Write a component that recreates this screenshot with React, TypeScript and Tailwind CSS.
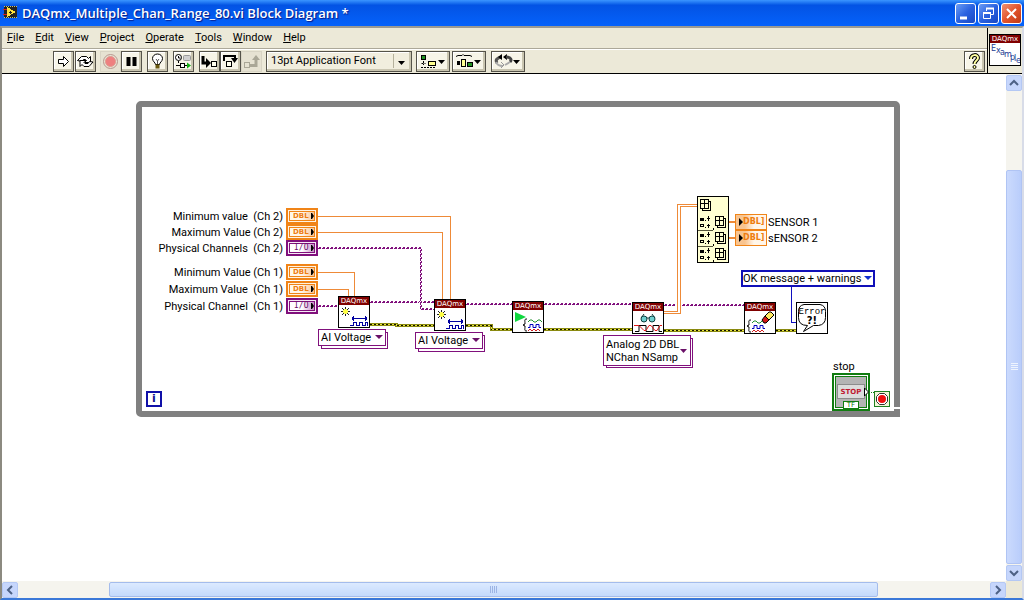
import type { ReactNode } from "react";
import clsx from "clsx";

const menus = ["File", "Edit", "View", "Project", "Operate", "Tools", "Window", "Help"];

const inputs = [
  { label: "Minimum value  (Ch 2)", kind: "DBL", at: "top-[134px]" },
  { label: "Maximum Value (Ch 2)", kind: "DBL", at: "top-[150px]" },
  { label: "Physical Channels  (Ch 2)", kind: "I/O", at: "top-[166px]" },
  { label: "Minimum Value (Ch 1)", kind: "DBL", at: "top-[190px]" },
  { label: "Maximum Value  (Ch 1)", kind: "DBL", at: "top-[207px]" },
  { label: "Physical Channel  (Ch 1)", kind: "I/O", at: "top-[224px]" },
];

const outputs = [
  { label: "SENSOR 1", at: "top-[140px]" },
  { label: "sENSOR 2", at: "top-[156px]" },
];

/* ---------- title bar ---------- */

const CaptionButton = ({
  label,
  close,
  children,
}: {
  label: string;
  close?: boolean;
  children: ReactNode;
}) => (
  <button
    aria-label={label}
    className={clsx(
      "flex h-[21px] w-[21px] items-center justify-center rounded-[3px] border border-white",
      close
        ? "bg-linear-to-br from-[#f09070] via-[#e2542c] to-[#c03a14]"
        : "bg-linear-to-br from-[#6c9cf4] via-[#2a62e0] to-[#1848c4]"
    )}
  >
    <svg width="19" height="19" viewBox="0 0 19 19" fill="none" stroke="#fff">
      {children}
    </svg>
  </button>
);

const TitleBar = () => (
  <header className="flex h-[26px] shrink-0 items-center bg-linear-to-b from-[#3b95ff] via-[#0353e4] via-20% to-[#0562fb] pr-[2px] pl-[3px]">
    <svg width="16" height="16" viewBox="0 0 16 16" shapeRendering="crispEdges">
      <rect x="1" y="1" width="13" height="12" fill="#222" />
      <path d="M1 1.500h13M1 12.500h13" stroke="#c8c070" strokeDasharray="1 1" />
      <path d="M4 2l9 5-9 5z" fill="#ffe23c" />
      <path d="M0 4.500h4M0 9.500h4" stroke="#d02020" />
      <path d="M6 7.500h3M7.500 6v3" stroke="#222" />
    </svg>
    <h1 className="ml-[3px] flex-1 truncate font-['Open_Sans','Noto_Sans',sans-serif] text-[13px] leading-[20px] font-semibold text-white [text-shadow:1px_1px_1px_#0a1883]">
      DAQmx_Multiple_Chan_Range_80.vi Block Diagram *
    </h1>
    <div className="flex gap-[2px]">
      <CaptionButton label="Minimize">
        <path d="M4 14h7" strokeWidth="3" />
      </CaptionButton>
      <CaptionButton label="Restore">
        <path d="M7.500 7V4.500h7v6H12" />
        <path d="M7 4.500h8" strokeWidth="2" />
        <path d="M4.500 8.500h7v6h-7z" />
        <path d="M4 9h8" strokeWidth="2" />
      </CaptionButton>
      <CaptionButton label="Close" close>
        <path d="M5 5l9 9M14 5l-9 9" strokeWidth="2" />
      </CaptionButton>
    </div>
  </header>
);

/* ---------- toolbar ---------- */

const ToolButton = ({
  label,
  wide,
  flat,
  children,
}: {
  label: string;
  wide?: boolean;
  flat?: boolean;
  children: ReactNode;
}) => (
  <button
    aria-label={label}
    disabled={flat}
    className={clsx(
      "flex h-[21px] shrink-0 items-center justify-center border",
      wide ? "w-[34px]" : "w-[21px]",
      flat
        ? "border-[#d8d4c4] bg-[#e6e2d2]"
        : "border-[#55534a] bg-[#f7f5e8] shadow-[inset_-2px_-2px_0_#c9c5b0,inset_1px_1px_0_#fff]"
    )}
  >
    <svg
      width={wide ? 32 : 19}
      height="19"
      viewBox={wide ? "0 0 32 19" : "0 0 19 19"}
      fill="none"
      stroke="#000"
    >
      {children}
      {wide && <path d="M21 8h7l-3.500 4z" fill="#000" stroke="none" />}
    </svg>
  </button>
);

const Toolbar = () => (
  <div className="flex h-[24px] items-center border-t border-white pl-[51px]">
    <div className="flex gap-px">
      <ToolButton label="Run">
        <path d="M4.500 7.500h5v-3l5 5-5 5v-3h-5z" fill="#fff" />
      </ToolButton>
      <ToolButton label="Run Continuously">
        <path d="M1.500 8.500l4-4h5l2 2 2-2v6h-6l2-2-1-1h-2l-1.500 2z" fill="#fff" />
        <path d="M17 10l-4 4.500H8l-2-2-2 2v-6h6l-2 2 1 1h3l1.500-2z" fill="#fff" />
      </ToolButton>
    </div>
    <div className="ml-[4px] flex">
      <ToolButton label="Abort Execution" flat>
        <circle cx="9.500" cy="9.500" r="7" stroke="#b89890" />
        <circle cx="9.500" cy="9.500" r="5" fill="#ee8080" stroke="#e09a90" />
      </ToolButton>
      <ToolButton label="Pause">
        <path d="M6.500 5v9M12.500 5v9" strokeWidth="4" />
      </ToolButton>
    </div>
    <div className="ml-[5px] flex">
      <ToolButton label="Highlight Execution">
        <path d="M7.500 12.500c0-2-3-3-3-6a5 4.500 0 0 1 10 0c0 3-3 4-3 6z" fill="#fff" />
        <path d="M8 7l1.500 2L11 7M9.500 9v3" stroke="#555" />
        <path d="M7.500 13.500h4M7.500 15.500h4" strokeWidth="2" stroke="#6b5a10" />
      </ToolButton>
    </div>
    <div className="ml-[5px] flex">
      <ToolButton label="Retain Wire Values">
        <circle cx="4.500" cy="5.500" r="3" fill="#fff" />
        <path d="M4.500 4v2h2M4.500 9v2" />
        <rect x="9.500" y="3.500" width="7" height="5" rx="1" fill="#d0d0d0" stroke="#999" />
        <path d="M2 13.500h5M10 13.500h3" />
        <rect x="6.500" y="11.500" width="4" height="4" fill="#fff" />
        <path d="M13 10.500l4 3-4 3z" fill="#10b010" stroke="none" />
      </ToolButton>
    </div>
    <div className="ml-[5px] flex">
      <ToolButton label="Step Into">
        <path d="M3 4v7h5" strokeWidth="3" />
        <path d="M6 6l5 5-5 5z" fill="#000" stroke="none" />
        <rect x="11.500" y="9.500" width="5" height="5" fill="#ffe" />
      </ToolButton>
      <ToolButton label="Step Over">
        <path d="M3 9V4h11v3" strokeWidth="2" />
        <path d="M10 6h7l-3.500 5z" fill="#000" stroke="none" />
        <rect x="5.500" y="9.500" width="5" height="5" fill="#ffe" />
      </ToolButton>
      <ToolButton label="Step Out" flat>
        <rect x="2.500" y="10.500" width="5" height="5" stroke="#aaa797" />
        <path d="M8 13.500h6V6" stroke="#aaa797" strokeWidth="3" />
        <path d="M10 8l4-5 4 5z" fill="#aaa797" stroke="none" />
      </ToolButton>
    </div>
    <div className="relative ml-[4px]">
      <select
        aria-label="Font"
        className="block h-[21px] w-[146px] appearance-none border border-[#55534a] bg-[#f1eede] pb-[2px] pl-[4px] leading-[16px] shadow-[inset_-2px_-2px_0_#c9c5b0,inset_1px_1px_0_#fff]"
      >
        <option>13pt Application Font</option>
      </select>
      <svg
        className="pointer-events-none absolute top-[2px] right-[4px]"
        width="16"
        height="17"
        viewBox="0 0 16 17"
      >
        <path d="M1.500 1v14" stroke="#b5b19c" />
        <path d="M6 8h7l-3.500 4z" />
      </svg>
    </div>
    <div className="ml-[4px] flex gap-[2px]">
      <ToolButton label="Align Objects" wide>
        <rect x="4.500" y="3.500" width="4" height="4" fill="#209020" />
        <path d="M6.500 9v4M4.500 11.500h4M4 15.500h14" strokeDasharray="2 1" />
        <rect x="11.500" y="9.500" width="7" height="4" fill="#ffff90" />
      </ToolButton>
      <ToolButton label="Distribute Objects" wide>
        <path d="M3 4.500l2-1h4l1-1 1 1h6l2 1" />
        <rect x="4" y="9" width="3" height="4" fill="#000" stroke="none" />
        <rect x="8.500" y="7.500" width="4" height="7" fill="#ffff90" />
        <rect x="14.500" y="10.500" width="5" height="4" fill="#209020" />
      </ToolButton>
    </div>
    <div className="ml-[5px] flex">
      <ToolButton label="Reorder" wide>
        <path d="M5 11C3 8 5 6 9 5" stroke="#555" strokeWidth="3" />
        <path d="M10 2v6L6 5zM15 2v6l-4-3z" fill="#000" stroke="none" />
        <path d="M14 5c5 0 6 3 4 5" stroke="#444" strokeWidth="3" />
        <path d="M4 10c1 3 4 4 7 4M13 13l5-3" stroke="#aaa" strokeWidth="2" />
        <path d="M9 10l3 3-3 3" stroke="#999" />
      </ToolButton>
    </div>
    <div className="mr-[2px] ml-auto">
      <ToolButton label="Context Help">
        <path d="M6 7c0-5 7-5 7-1 0 2-3.500 3-3.500 6" strokeWidth="4" />
        <path d="M6 7c0-5 7-5 7-1 0 2-3.500 3-3.500 6" stroke="#ffffa0" strokeWidth="2" />
        <circle cx="9.500" cy="15" r="1.500" fill="#ffffa0" />
      </ToolButton>
    </div>
  </div>
);

const ViIcon = () => (
  <div className="h-[32px] w-[32px] border border-black bg-white">
    <DaqHeader />
    <svg width="30" height="22" viewBox="0 0 30 22">
      <text
        x="1 6 10 14 20 24 26"
        y="8 10 12 14 17 18 20"
        className="fill-[#1c3c94] font-['DejaVu_Sans',sans-serif] text-[8px]"
      >
        Example
      </text>
    </svg>
  </div>
);

/* ---------- diagram nodes ---------- */

const DaqHeader = () => (
  <div className="h-[8px] overflow-hidden bg-[#800000] text-center font-['DejaVu_Sans',sans-serif] text-[7px] leading-[8px] text-white">
    DAQmx
  </div>
);

const DaqNode = ({ at, children }: { at: string; children: ReactNode }) => (
  <div className={clsx("absolute h-[32px] w-[32px] border border-black bg-white", at)}>
    <DaqHeader />
    <svg width="30" height="22" viewBox="1 9 30 22" fill="none">
      {children}
    </svg>
  </div>
);

const CreateGlyph = () => (
  <>
    <circle cx="7.500" cy="15.500" r="2.500" fill="#ffff40" />
    <path
      d="M7.500 11v2M7.500 18v2M3 15.500h2M10 15.500h2M4 12l2 2M11 12l-2 2M4 19l2-2M11 19l-2-2"
      stroke="#222"
    />
    <g stroke="#0000a0" shapeRendering="crispEdges">
      <path d="M14 22.500h15M15.500 20v5M14.500 21v3M27.500 20v5M28.500 21v3" />
      <path d="M12 29.500h3v-3h3v3h3v-3h3v3h3v-3h2v3" />
    </g>
  </>
);

const Brace = () => <path d="M5 0c-3 0-2 1-2 5L1 6l2 1c0 4-1 5 2 5" stroke="#000" />;

const Waves = () => (
  <>
    <path d="M0 2l2-2 2 0 2 2 2 0 2-2 2 0 2 2" stroke="#209030" />
    <path d="M0 7.500h2V4.500h3v3h3V4.500h3v3h2" stroke="#0000c0" />
    <path d="M0 11l2-2 2 2 2-2 2 2 2-2 2 2" stroke="#d02020" />
  </>
);

const Terminal = ({ kind }: { kind: string }) => (
  <span
    className={clsx(
      "flex h-[16px] w-[32px] border-[2px] p-px",
      kind === "DBL" ? "border-[#f08418] bg-[#fff3e2]" : "border-[#80107c] bg-[#f6eaf6]"
    )}
  >
    <span
      className={clsx(
        "flex w-full items-center justify-between border leading-[8px]",
        kind === "DBL"
          ? "border-[#f08418] bg-linear-to-r from-[#fff6ea] from-50% to-[#f8c490] pl-[3px] font-['DejaVu_Sans',sans-serif] text-[7px] font-bold text-[#ee7d10]"
          : "border-[#80107c] bg-linear-to-r from-white from-50% to-[#c890c8] pl-[4px] font-['DejaVu_Sans_Mono',monospace] text-[8px] text-[#6a1068]"
      )}
    >
      {kind}
      <svg className="shrink-0" width="3" height="6" viewBox="0 0 3 6">
        <path d="M0 0h1l2 3-2 3H0z" fill="#000" />
      </svg>
    </span>
  </span>
);

const Selector = ({ at, label }: { at: string; label: string }) => (
  <div className={clsx("absolute", at)}>
    <div className="absolute top-[3px] left-[3px] h-[17px] w-[67px] border border-[#80107c] bg-white" />
    <select
      aria-label={label}
      className="relative block h-[17px] w-[68px] appearance-none border border-[#80107c] bg-white pt-px pl-[2px] leading-[14px]"
    >
      <option>AI Voltage</option>
    </select>
    <svg
      className="pointer-events-none absolute top-[6px] left-[57px]"
      width="8"
      height="4"
      viewBox="0 0 8 4"
    >
      <path d="M0 0h8l-4 4z" fill="#6a1068" />
    </svg>
  </div>
);

const ArrayGlyph = ({ x, y }: { x: number; y: number }) => (
  <g transform={`translate(${x} ${y})`} fill="#ffffd2" stroke="#000">
    <rect x="2.500" y="2.500" width="8" height="9" />
    <rect x="0.500" y="0.500" width="8" height="9" />
    <path d="M4.500 0.500v9M0.500 4.500h8" />
  </g>
);

const IndexArray = () => (
  <svg
    className="absolute top-[122px] left-[695px]"
    width="32"
    height="67"
    viewBox="0 0 32 67"
    shapeRendering="crispEdges"
    fill="none"
  >
    <rect x="0.500" y="0.500" width="31" height="66" fill="#ffffd2" stroke="#000" />
    <ArrayGlyph x={3} y={3} />
    {[19, 35, 51].map((y) => (
      <g key={y}>
        {y > 19 && <path d={`M1 ${y - 0.5}h15`} stroke="#55553c" />}
        <ArrayGlyph x={18} y={y + 1} />
        <rect x="3" y={y + 3} width="4" height="3" fill="#000" />
        <rect x="3.500" y={y + 9.5} width="3" height="2" stroke="#000" />
        <path
          d={`M8 ${y + 5.5}h1M10 ${y + 3.5}h3M11.500 ${y + 1}v5M8 ${y + 12.5}h1M10 ${y + 10.5}h3M11.500 ${y + 9}v4M16.500 ${y + 13}v2`}
          stroke="#000"
        />
      </g>
    ))}
  </svg>
);

const ErrorNode = () => (
  <svg
    className="absolute top-[228px] left-[794px]"
    width="32"
    height="32"
    viewBox="0 0 32 32"
    fill="none"
    stroke="#000"
  >
    <rect x="0.500" y="0.500" width="31" height="31" fill="#fff" />
    <path
      d="M8 2.500h16q5.500 1 5.500 7v6q0 7-7 8h-5l-10 6 4-6q-9 0-9-8v-6q0-6 5.500-7z"
      fill="#fff"
    />
    <text
      x="16"
      y="12"
      textAnchor="middle"
      stroke="none"
      className="fill-black font-['Liberation_Mono',monospace] text-[9px]"
    >
      Error
    </text>
    <text
      x="16"
      y="22"
      textAnchor="middle"
      stroke="none"
      className="fill-black font-['DejaVu_Sans',sans-serif] text-[10px] font-bold"
    >
      ?!
    </text>
  </svg>
);

/* ---------- wires ---------- */

const channelWires = [
  "M318 248h103v61h13",
  "M318 306h20",
  "M370 302h49",
  "M423 302h11",
  "M466 304h46",
  "M544 304h88",
  "M664 305h11",
  "M682 305h62",
];

const errorWires = [
  "M370 324.500h26v1h38",
  "M466 325.500h25v4h21",
  "M544 329.500h88",
  "M664 330.500h80",
  "M776 330.500h20",
];

const Wires = () => (
  <svg
    className="absolute top-0 left-0"
    width="1003"
    height="507"
    viewBox="2 74 1003 507"
    fill="none"
    shapeRendering="crispEdges"
  >
    {errorWires.map((d) => (
      <g key={d}>
        <path d={d} stroke="#8a8a10" strokeWidth="3" />
        <path d={d} stroke="#e8e440" />
        <path d={d} stroke="#101000" strokeDasharray="2 2" />
      </g>
    ))}
    {channelWires.map((d) => (
      <g key={d} stroke="#80107c" transform="translate(0.500 -0.500)">
        <path d={d} strokeDasharray="2 2" />
        <path d={d} strokeDasharray="3 1" transform="translate(-1 1)" />
      </g>
    ))}
    <path
      d="M318 216.500h132.500V299M318 232.500h124.500V299M318 272.500h36.500V296M318 289.500h30.500V296"
      stroke="#ee8a38"
    />
    <path d="M664 311.500h13.500V204.500H697M664 313.500h16.500V206.500H697" stroke="#ee8a38" />
    <path d="M729 222h6M729 238h6" stroke="#ee8a38" strokeWidth="2" />
    <path d="M791.500 287v35.500H796" stroke="#1010c0" />
    <path d="M869 392.500h6" stroke="#108010" strokeDasharray="1 1" />
  </svg>
);

const Diagram = () => (
  <main className="relative min-w-0 flex-1 overflow-hidden bg-white">
    <div className="absolute top-[27px] left-[134px] h-[316px] w-[764px] rounded-[5px] rounded-br-none border-[6px] border-[#808080]" />
    <div className="absolute top-[333px] left-[890px] h-[2px] w-[8px] bg-white" />

    <Wires />

    {inputs.map((input) => (
      <div
        key={input.label}
        className={clsx(
          "absolute left-[116px] flex w-[200px] justify-end gap-[3px] leading-[18px] whitespace-pre",
          input.at
        )}
      >
        {input.label}
        <Terminal kind={input.kind} />
      </div>
    ))}

    <DaqNode at="left-[336px] top-[222px]">
      <CreateGlyph />
    </DaqNode>
    <DaqNode at="left-[432px] top-[225px]">
      <CreateGlyph />
    </DaqNode>
    <DaqNode at="left-[510px] top-[227px]">
      <path d="M3 11l11 5-11 5z" fill="#10d840" />
      <g transform="translate(10 18)">
        <Brace />
      </g>
      <g transform="translate(16 19)">
        <Waves />
      </g>
    </DaqNode>
    <DaqNode at="left-[630px] top-[228px]">
      <circle cx="12" cy="17" r="3" fill="#70d0d0" stroke="#104040" />
      <circle cx="20" cy="17" r="3" fill="#70d0d0" stroke="#104040" />
      <path d="M15 16h2M9 16l3-4M23 16l-3-4" stroke="#104040" />
      <path d="M3 29.500h4v-6h7v6h7v-6h6v6h3" stroke="#000" />
      <path d="M2 23.500h5l5 5h2l3-5h2l4 5h2l3-5h2" stroke="#e01818" />
    </DaqNode>
    <DaqNode at="left-[742px] top-[228px]">
      <g transform="translate(2 18)">
        <Brace />
      </g>
      <g transform="translate(8 19)">
        <Waves />
      </g>
      <path d="M18 18l3-4 4 4-3 3h-2z" fill="#d01818" stroke="#000" />
      <path d="M21 14l4-4h2l3 3-5 5z" fill="#ffe860" stroke="#000" />
    </DaqNode>
    <ErrorNode />
    <IndexArray />

    <Selector at="left-[316px] top-[255px]" label="Channel 1 type" />
    <Selector at="left-[413px] top-[258px]" label="Channel 2 type" />

    <div className="absolute top-[264px] left-[604px] h-[30px] w-[87px] border border-[#80107c]" />
    <button
      aria-haspopup="listbox"
      className="absolute top-[261px] left-[601px] flex h-[31px] w-[88px] items-center justify-between border border-[#80107c] bg-white pr-[3px] pl-[2px] text-left leading-[13px] whitespace-nowrap"
    >
      <span>
        Analog 2D DBL
        <br />
        NChan NSamp
      </span>
      <svg className="shrink-0" width="7" height="4" viewBox="0 0 7 4">
        <path d="M0 0h7l-3.500 4z" fill="#6a1068" />
      </svg>
    </button>

    {outputs.map((output) => (
      <div
        key={output.label}
        className={clsx("absolute left-[733px] flex gap-px leading-[18px]", output.at)}
      >
        <span className="flex h-[16px] w-[32px] items-center border border-[#f08418] bg-linear-to-r from-[#f8c490] from-30% to-[#fff6ea] to-60% pl-[3px] font-['DejaVu_Sans',sans-serif] text-[8px] leading-[8px] font-bold text-[#ee7d10]">
          <svg className="shrink-0" width="4" height="8" viewBox="0 0 4 8">
            <path d="M0 0l4 4-4 4z" />
          </svg>
          DBL]
        </span>
        {output.label}
      </div>
    ))}

    <div className="absolute top-[196px] left-[739px]">
      <select
        aria-label="Dialog type"
        className="block h-[17px] w-[134px] appearance-none border-[2px] border-[#1010b8] bg-white pt-px leading-[12px]"
      >
        <option>OK message + warnings</option>
      </select>
      <svg
        className="pointer-events-none absolute top-[6px] right-[3px]"
        width="8"
        height="4"
        viewBox="0 0 8 4"
      >
        <path d="M0 0h8l-4 4z" fill="#1030d0" />
      </svg>
    </div>

    <div className="absolute top-[317px] left-[144px] flex h-[16px] w-[16px] items-center justify-center border-[2px] border-[#1010a8] font-['DejaVu_Sans',sans-serif] text-[11px] leading-[12px] font-bold text-[#101090]">
      i
    </div>

    <span className="absolute top-[285px] left-[831px] leading-[16px]">stop</span>
    <div className="absolute top-[299px] left-[830px] flex h-[38px] w-[38px] flex-col items-center justify-between border-[2px] border-[#107c10] bg-[#b4b4b4] pt-[9px] shadow-[inset_0_0_0_1px_#fff,inset_0_0_0_2px_#107c10]">
      <button className="flex h-[15px] w-[28px] items-center justify-center border border-[#8c8c8c] bg-[#dcdcdc] font-['DejaVu_Sans',sans-serif] text-[7px] leading-[8px] font-bold text-[#c01830]">
        STOP
      </button>
      <span className="flex h-[8px] w-[16px] items-center justify-center border border-[#107c10] bg-white font-['DejaVu_Sans',sans-serif] text-[7px] leading-[7px] text-[#107c10]">
        TF
      </span>
    </div>
    <svg className="absolute top-[313px] left-[862px]" width="6" height="10" viewBox="0 0 6 10">
      <path d="M0.500 1l4 4-4 4z" fill="#fff" stroke="#000" />
    </svg>
    <svg className="absolute top-[317px] left-[872px]" width="16" height="16" viewBox="0 0 16 16">
      <rect x="0.500" y="0.500" width="15" height="15" fill="#f2f8d8" stroke="#208020" />
      <path d="M5.500 2.500h5l3 3v5l-3 3h-5l-3-3v-5z" fill="#fff" stroke="#333" />
      <circle cx="8" cy="8" r="4" fill="#f01010" />
    </svg>
  </main>
);

/* ---------- scroll bars ---------- */

const ScrollArrow = ({ label, d }: { label: string; d: string }) => (
  <button
    aria-label={label}
    className="flex h-[16px] w-[16px] shrink-0 items-center justify-center rounded-[2px] border border-[#b4c8f4] bg-[#c6d6fc]"
  >
    <svg width="10" height="10" viewBox="0 0 10 10" fill="none" stroke="#4d6185" strokeWidth="2">
      <path d={d} />
    </svg>
  </button>
);

const VerticalScroll = () => (
  <div className="flex w-[16px] shrink-0 flex-col gap-px bg-[#f5f4ee] pt-px">
    <ScrollArrow label="Scroll up" d="M1 7l4-4 4 4" />
    <div className="flex flex-1 flex-col">
      <div className="flex-[78]" />
      <div className="flex flex-[395] items-center justify-center rounded-[2px] border border-[#b0c4f4] bg-linear-to-r from-[#cbdafd] to-[#b9cdfb]">
        <svg width="7" height="8" viewBox="0 0 7 8">
          <path d="M0 0.500h7M0 2.500h7M0 4.500h7M0 6.500h7" stroke="#eef4fe" />
        </svg>
      </div>
    </div>
    <ScrollArrow label="Scroll down" d="M1 3l4 4 4-4" />
  </div>
);

const HorizontalScroll = () => (
  <div className="flex h-[17px] shrink-0 items-center bg-[#f5f4ee]">
    <ScrollArrow label="Scroll left" d="M7 1L3 5l4 4" />
    <div className="flex h-[15px] flex-1">
      <div className="flex-[91]" />
      <div className="flex flex-[768] items-center justify-center rounded-[2px] border border-[#a4bcec] bg-linear-to-b from-[#dceaff] to-[#c4dafc]">
        <svg width="8" height="7" viewBox="0 0 8 7">
          <path d="M0.500 0v7M2.500 0v7M4.500 0v7M6.500 0v7" stroke="#9cb4e4" />
        </svg>
      </div>
      <div className="flex-[112]" />
    </div>
    <ScrollArrow label="Scroll right" d="M3 1l4 4-4 4" />
    <div className="h-full w-[16px] bg-[#ece9d8]" />
  </div>
);

const App = () => {
  return (
    <div className="flex h-screen flex-col overflow-hidden bg-[#ece9d8] font-['Roboto','Noto_Sans',sans-serif] text-[11px] text-black">
      <TitleBar />
      <div className="flex min-h-0 flex-1 flex-col border-x-[2px] border-t-[2px] border-b-[2px] border-t-[#9a9a94] border-r-[#d8dce8] border-b-[#3a78d8] border-l-[#8c8a80]">
        <div className="flex h-[46px] shrink-0 border-b border-black">
          <div className="min-w-0 flex-1">
            <nav className="flex h-[21px] items-center gap-[11px] border-b border-[#aca899] pl-[5px]">
              {menus.map((menu) => (
                <button key={menu} className="leading-[16px]">
                  <span className="underline">{menu[0]}</span>
                  {menu.slice(1)}
                </button>
              ))}
            </nav>
            <Toolbar />
          </div>
          <div className="flex w-[35px] justify-center border-l border-black pt-[6px]">
            <ViIcon />
          </div>
        </div>
        <div className="flex min-h-0 flex-1">
          <Diagram />
          <VerticalScroll />
        </div>
        <HorizontalScroll />
      </div>
    </div>
  );
};

export default App;
